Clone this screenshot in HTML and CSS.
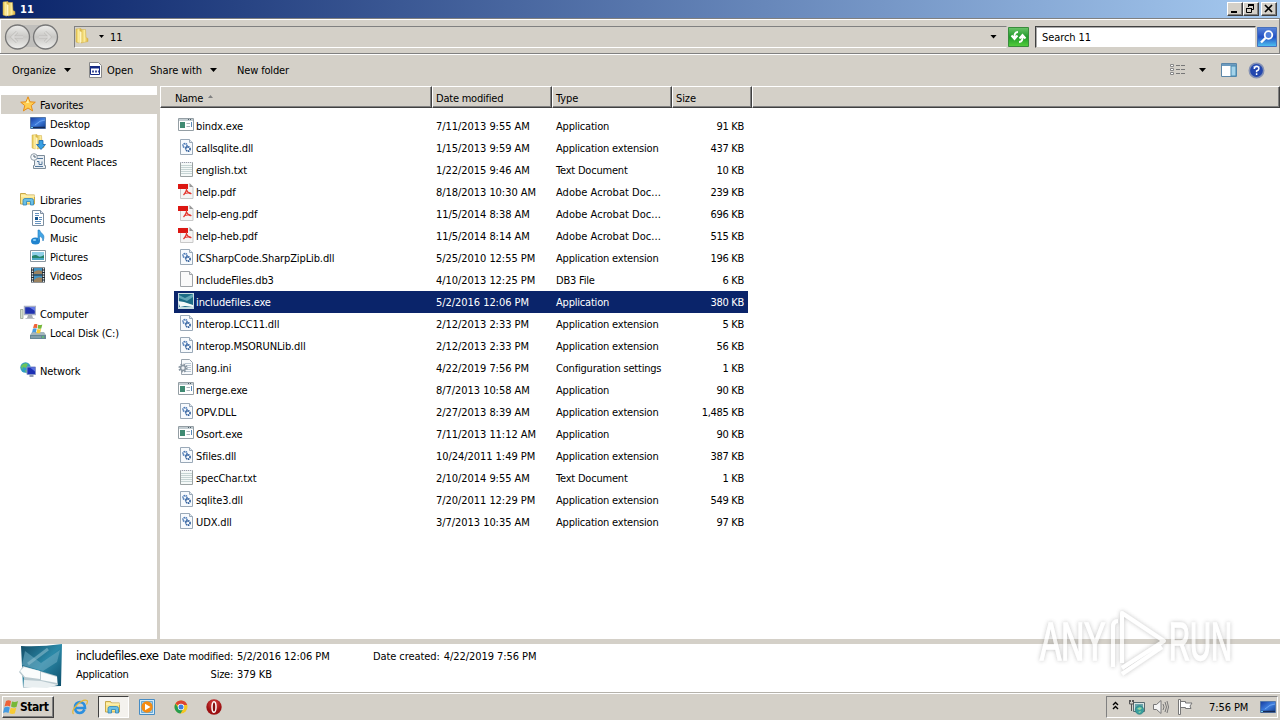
FILE: index.html
```html
<!DOCTYPE html>
<html lang="en">
<head>
<meta charset="utf-8">
<title>11</title>
<link rel="stylesheet" href="styles.css">
</head>
<body>
<svg class="defs" width="0" height="0" aria-hidden="true">
  <defs>
    <linearGradient id="gold" x1="0" x2="1"><stop offset="0" stop-color="#e2c04c"/><stop offset=".5" stop-color="#fbeb98"/><stop offset="1" stop-color="#d9ae3c"/></linearGradient>
    <linearGradient id="blue" x1="0" y1="0" x2="1" y2="1"><stop offset="0" stop-color="#163a9c"/><stop offset=".5" stop-color="#3f7fe0"/><stop offset="1" stop-color="#123c8c"/></linearGradient>
    <linearGradient id="teal" x1="0" y1="0" x2="1" y2="1"><stop offset="0" stop-color="#124a64"/><stop offset=".5" stop-color="#2b89a8"/><stop offset="1" stop-color="#0d4c68"/></linearGradient>
    <linearGradient id="disc" x1="0" y1="0" x2="0" y2="1"><stop offset="0" stop-color="#eeeeec"/><stop offset=".5" stop-color="#c9c8c5"/><stop offset="1" stop-color="#f0f0ee"/></linearGradient>
    <linearGradient id="grn" x1="0" y1="0" x2="0" y2="1"><stop offset="0" stop-color="#6cc46a"/><stop offset=".5" stop-color="#1f9a2a"/><stop offset="1" stop-color="#53cf3c"/></linearGradient>
    <linearGradient id="srch" x1="0" y1="0" x2="0" y2="1"><stop offset="0" stop-color="#5a86d8"/><stop offset=".5" stop-color="#2350c4"/><stop offset="1" stop-color="#4fc4f2"/></linearGradient>
    <radialGradient id="red" cy=".3"><stop offset="0" stop-color="#e24a48"/><stop offset="1" stop-color="#9c1012"/></radialGradient>
    <filter id="soft" x="-10%" y="-20%" width="120%" height="140%"><feDropShadow dx="0" dy="0" stdDeviation="2" flood-color="#777" flood-opacity=".6"/></filter>
  </defs>
  <symbol id="folder" viewBox="0 0 16 16"><path d="M2 1l5-.5v13L5 15l-3-1z" fill="url(#gold)" stroke="#d3b04a" stroke-width=".5"/><path d="M7 1.500h4.500l.5 8 2 1v3L7 15z" fill="url(#gold)" stroke="#d3b04a" stroke-width=".5"/><path d="M5.500 3l2 1v10l-2 1.500z" fill="#fff6c4"/></symbol>
  <symbol id="lib" viewBox="0 0 16 16"><path d="M.5 13V2.500h5l1 1.500h8V13z" fill="#fbe68c" stroke="#c8a84a"/><path d="M1 5h14" stroke="#fff7c9"/><path d="M3 14V9.500q0-2 2-2h6.500q2 0 2 2V14h-3v-3.500h-4V14z" fill="#69bfe6" stroke="#2d83b8" stroke-width=".8"/></symbol>
  <symbol id="exe" viewBox="0 0 16 16"><path d="M.5 1.500h15v12H.5z" fill="#fff" stroke="#949ea4"/><path d="M1 2h14v2H1z" fill="#c3cdd2"/><path d="M10 2.500h4" stroke="#4c5c66" stroke-dasharray="1 1"/><path d="M2 5h5v6H2z" fill="#3f8a72"/><path d="M8.500 6.500h3.500M8.500 9.500h3.500" stroke="#a9b5bb"/><path d="M13.500 5v5" stroke="#5989b8"/></symbol>
  <symbol id="page" viewBox="0 0 16 16"><path d="M2.500.5h9l3 3v12h-12z" fill="#fafafa" stroke="#a0a4a8"/><path d="M11.500.5v3h3" fill="#e4e6e8" stroke="#a0a4a8"/></symbol>
  <symbol id="dll" viewBox="0 0 16 16"><path d="M2.500.5h9l3 3v12h-12z" fill="#f7fafd" stroke="#9aa9b8"/><path d="M11.500.5v3h3" fill="#dfe7ee" stroke="#9aa9b8"/><circle cx="7" cy="6.500" r="2" fill="none" stroke="#4a78b4" stroke-width="1.700" stroke-dasharray="1.300 .5"/><circle cx="10" cy="10" r="2.100" fill="none" stroke="#315f9c" stroke-width="1.700" stroke-dasharray="1.300 .5"/></symbol>
  <symbol id="txt" viewBox="0 0 16 16"><path d="M2.500 1.500h12v14h-12z" fill="#f5f9f8" stroke="#9ba2a3"/><path d="M3 4.500h11M3 6.500h11M3 8.500h11M3 10.500h11M3 12.500h11" stroke="#c6d4d4"/><path d="M3 1.500h11" stroke="#dde" stroke-dasharray="1 1"/></symbol>
  <symbol id="pdf" viewBox="0 0 16 16"><path d="M2.500.5h9l3.500 3v12H2.500z" fill="#f4f4f4"/><path d="M2.500 6v9.500H15V4" fill="none" stroke="#c9c9c9"/><path d="M11.500 0L15.500 4h-4z" fill="#999"/><path d="M0 1h10v5H0z" fill="#dc1712"/><path d="M8.500 5q.5 3-3 7M8.500 7q2 4 5 3.500M6.500 10.500l6-1" fill="none" stroke="#e3342c" stroke-width="1.200"/></symbol>
  <symbol id="ini" viewBox="0 0 16 16"><path d="M3.500.5h8l3 3v12h-11z" fill="#f8fafc" stroke="#9aa4ae"/><path d="M7 4.500h6M8 6.500h5M9 8.500h4M9 10.500h4M7 12.500h6" stroke="#b9c6d2"/><circle cx="5" cy="9" r="3.400" fill="#eef1f4" stroke="#8996a2" stroke-width="2.400" stroke-dasharray="1.500 1.170"/><circle cx="5" cy="9" r="2.400" fill="#eef1f4" stroke="#8996a2" stroke-width="1.500"/></symbol>
  <symbol id="book" viewBox="0 0 46 46"><path d="M3 2q20 1 41-2l-1 42-38 1z" fill="url(#teal)"/><path d="M7 7l16 12L42 6l-3 12-14 9-21-6z" fill="#69a9bf" opacity=".6"/><path d="M10 20L30 5" stroke="#9cc8d6" stroke-width="3" opacity=".5"/><path d="M1 28l4-6 17 5 17 5 1 9-16 1-19 2 1-10z" fill="#b9c9cf"/><path d="M2 27l4-4 16 4 0 8-15-2zM23 28l16 5 0 6-16-3z" fill="#fafcfc"/><path d="M6 36l17 1 17 4-11 3-23-1z" fill="#e9eff1"/></symbol>
  <symbol id="bookmini" viewBox="0 0 16 16"><path d="M0 0h16v16H0z" fill="#c5dbe0"/><path d="M1 1h14v13H1z" fill="#1d6c86"/><path d="M1 2l6 3 8-4v3L9 8 1 5z" fill="#62a5b6"/><path d="M0 8l6 1 9 3v2l-8-1-5 1z" fill="#f4f9fa"/></symbol>
  <symbol id="star" viewBox="0 0 16 16"><path d="M8 .8l2 5 5.300.4-4.100 3.400 1.400 5.300L8 12l-4.600 2.900 1.400-5.300L.7 6.200 6 5.800z" fill="#ffcf52" stroke="#e58c1a"/><path d="M8 3l1 4H6z" fill="#fff3a8"/></symbol>
  <symbol id="desk" viewBox="0 0 16 16"><path d="M.5 2.500h15v11H.5z" fill="url(#blue)" stroke="#5577a8"/><path d="M1 12.500h14" stroke="#152954" stroke-width="1.500"/><path d="M1 12.500h2" stroke="#6fd0f0"/><path d="M5 10q5-5 10-5" stroke="#6ea4ee" fill="none"/></symbol>
  <symbol id="down" viewBox="0 0 16 16"><use href="#folder"/><path d="M9 6.500h4v4h2.500L11 15.500 6.500 10.500H9z" fill="#38a0e4" stroke="#1665ac" stroke-width=".8"/></symbol>
  <symbol id="recent" viewBox="0 0 16 16"><path d="M4.500 2.500h10v10h1v3h-12v-3h1z" fill="#e9eef3" stroke="#7b8b99"/><path d="M7 5.500h6M7 8.500h2v3h3v-3M5 13.500h8" stroke="#54789c" fill="none"/><circle cx="4" cy="4" r="3.300" fill="#f7fafc" stroke="#909da8"/><path d="M4 2v2h2" fill="none" stroke="#567"/></symbol>
  <symbol id="doc" viewBox="0 0 16 16"><path d="M2.500.5h8l3 3v12h-11z" fill="#fff" stroke="#7d8fa0"/><path d="M10.500.5v3h3" fill="#dde" stroke="#7d8fa0"/><path d="M5 3.500h4M5 5.500h4M5 11.500h6M5 13.500h6" stroke="#6693bf"/><path d="M5 7h3v3H5z" fill="#16558f"/><path d="M9 7.500h3M9 9.500h3" stroke="#6693bf"/></symbol>
  <symbol id="music" viewBox="0 0 16 16"><ellipse cx="5.500" cy="12" rx="4.500" ry="3.500" fill="#2084cf"/><path d="M8 12V1h1.500q.5 2 3 4t.5 7q0-4-3.500-5V12z" fill="#42a5e5" stroke="#1c75bb" stroke-width=".6"/><ellipse cx="4.500" cy="11" rx="1.700" ry="1" fill="#8cd1f8"/></symbol>
  <symbol id="pics" viewBox="0 0 16 16"><path d="M.5 2.500h15v11H.5z" fill="#fff" stroke="#8a96a0"/><path d="M2 4h12v8H2z" fill="#8fcfe6"/><path d="M2 8q4-2 6 0t6-1v5H2z" fill="#25846a"/><path d="M2 10h12v2H2z" fill="#4ba8c4"/></symbol>
  <symbol id="video" viewBox="0 0 16 16"><path d="M1 .5h14v15H1z" fill="#20282f"/><path d="M4 1h8v6.500H4zM4 8.500h8V15H4z" fill="#4293c3"/><path d="M4 5q3-3 8-1v3H4zM4 13q4-4 8-2v4H4z" fill="#9b8361"/><path d="M2.500 1v14M13.500 1v14" stroke="#d7e3ea" stroke-width="1.500" stroke-dasharray="1.500 1"/></symbol>
  <symbol id="comp" viewBox="0 0 16 16"><path d="M.5 4.500h2.500v9H.5z" fill="#d5dfcd" stroke="#8a9887" stroke-width=".7"/><path d="M4.500 1.500h11v8h-11z" fill="#2032b0" stroke="#a7afc4" stroke-width="1.400"/><path d="M9 2h6v4z" fill="#667ce8"/><path d="M8 10h4l1 3H7z" fill="#a8adb5"/><path d="M5.500 13.500h9" stroke="#bdc1c8"/></symbol>
  <symbol id="disk" viewBox="0 0 16 16"><path d="M2 8h12l2 3v3.500H0V11z" fill="#a3b6bd"/><path d="M0 11h16v4H0z" fill="#668896"/><path d="M1 13h10" stroke="#9db5bd"/><path d="M12 13h2" stroke="#61e35b"/><use href="#win" x="2" y="-1" width="11" height="11"/></symbol>
  <symbol id="win" viewBox="0 0 16 16"><path d="M3 2q2.500-1.500 5 0L7 7.500q-2.500-1.500-5.500 0z" fill="#ef6338"/><path d="M9 2.500q3 1 6-.5l-1.500 6q-3 1-5.500-.5z" fill="#76b83a"/><path d="M1.300 8.500q3-1.500 5.500 0L5.500 14Q3 12.500 0 14z" fill="#459be1"/><path d="M7.800 8.800q3 1 5.500 0l-1.500 5.700q-3 1-5.500-.5z" fill="#f7cb35"/></symbol>
  <symbol id="net" viewBox="0 0 16 16"><circle cx="5.500" cy="5.500" r="5.200" fill="#2f9cc4"/><path d="M1 4q3-4 7-2L6 6 3 5 2 8zM5 8l3 1-2 2z" fill="#6cc45c"/><path d="M7 5h8.500v7.500H7z" fill="#1c30b4" stroke="#8794c8"/><path d="M10 5.500h5v4z" fill="#5a72e0"/><path d="M9.500 13h4v2h-4z" fill="#919bb4"/></symbol>
  <symbol id="ie" viewBox="0 0 16 16"><path d="M12.500 10.500Q11 14 7.500 14 3 13.500 3 8.500T8 3q5 .5 5 6H4" fill="none" stroke="#2b8fdf" stroke-width="2.600"/><path d="M1.500 15Q-1 12 5 6T15 1.500q1 1-.5 4" fill="none" stroke="#e4b736" stroke-width="1.200"/></symbol>
  <symbol id="play" viewBox="0 0 16 16"><path d="M.5.500h15v15H.5z" fill="#d3eaf8" stroke="#468cc4"/><path d="M2.500 2.500h11v11h-11z" fill="#9fcdea" stroke="#68a8d4"/><circle cx="8" cy="8" r="5.700" fill="#f58b12"/><path d="M6 4.800L11.500 8 6 11.200z" fill="#fff"/></symbol>
  <symbol id="chrome" viewBox="0 0 16 16"><circle cx="8" cy="8" r="6.500" fill="#f5c623"/><path d="M8 8L2.400 4.700A6.500 6.500 0 0 1 14.200 6H8z" fill="#dc4433"/><path d="M2.400 4.700A6.500 6.500 0 0 0 7.500 14.500L10.500 9.500 5.500 9z" fill="#269c50"/><circle cx="8" cy="8" r="3.200" fill="#fff"/><circle cx="8" cy="8" r="2.500" fill="#3d7de0"/></symbol>
  <symbol id="opera" viewBox="0 0 16 16"><circle cx="8" cy="8" r="7.700" fill="url(#red)"/><ellipse cx="8" cy="8" rx="2" ry="5.300" fill="#861010" stroke="#fff" stroke-width="1.500"/></symbol>
</svg>

<header class="titlebar">
  <svg class="i16"><use href="#folder"/></svg><h1 class="title">11</h1>
  <div class="winbtns">
    <span class="winbtn"><svg width="13" height="11"><path d="M3 9h6" stroke="#000" stroke-width="2"/></svg></span>
    <span class="winbtn"><svg width="13" height="11"><path d="M4 1h6v2H4zM2 5h6v1H2z" fill="#000"/><path d="M4.500 4V1.500h5v5H8M2.500 5.500h5v4h-5z" fill="none" stroke="#000"/></svg></span>
    <span class="winbtn close"><svg width="13" height="11"><path d="M3 2l7 7M10 2L3 9" stroke="#000" stroke-width="1.700"/></svg></span>
  </div>
</header>

<nav class="addressbar">
  <svg class="navbtns" width="56" height="30" viewBox="0 0 56 30"><path d="M12 3h32v22H12z" fill="#c0bfbc"/><g fill="url(#disc)" stroke="#777" stroke-width="1.300"><circle cx="14.500" cy="15" r="12"/><circle cx="42.500" cy="15" r="12"/></g><path d="M20 15H9m5-5l-5 5 5 5M36 15h11m-5-5l5 5-5 5" fill="none" stroke="#bfbebb" stroke-width="3"/><path d="M20 15H9m5-5l-5 5 5 5M36 15h11m-5-5l5 5-5 5" fill="none" stroke="#dad9d7" stroke-width="1.700"/></svg>
  <div class="path"><svg class="i16 crumb"><use href="#folder"/></svg><i class="tri small"></i><span class="t">11</span><i class="tri last"></i></div>
  <svg class="refresh" width="21" height="20" viewBox="0 0 21 20"><path d="M.5.500h20v19H.5z" fill="url(#grn)" stroke="#398c3c"/><path d="M10 5q-4 0-3.500 6M3.500 8.500l3 3.500 3-3.500M11 15q4 0 3.500-6M11.500 11.500l3-3.500 3 3.500" fill="none" stroke="#fff" stroke-width="2"/></svg>
  <div class="search"><span class="t">Search 11</span></div>
  <svg class="go" width="20" height="20" viewBox="0 0 20 20"><path d="M.5.500h19v19H.5z" fill="url(#srch)" stroke="#4870bb"/><circle cx="11.500" cy="8" r="3.800" fill="#4f7edb" stroke="#fff" stroke-width="1.800"/><path d="M8.500 11L4 15.500" stroke="#fff" stroke-width="2.400"/></svg>
</nav>

<div class="toolbar">
  <span class="t tool">Organize</span><i class="tri a"></i>
  <svg class="i16 openico"><path d="M1.500.500h9l3 3v12h-12z" fill="#fff" stroke="#888"/><path d="M2.500 5.500h9v7h-9z" fill="#fff" stroke="#152a83"/><path d="M2 4h10v2.500H2z" fill="#152a83"/><path d="M4 9.500h7" stroke="#40509c" stroke-width="2" stroke-dasharray="2 1"/></svg>
  <span class="t open">Open</span><span class="t share">Share with</span><i class="tri b"></i><span class="t newf">New folder</span>
  <div class="views">
    <svg width="16" height="14"><path d="M.5 1.500h3v2h-3zM.5 5.500h3v2h-3zM.5 9.500h3v2h-3z" fill="#fff" stroke="#888"/><path d="M6 2.500h9M6 6.500h9M6 10.500h9" stroke="#777" stroke-dasharray="4 1"/></svg>
    <i class="tri c"></i>
    <svg class="pane" width="16" height="14"><path d="M.5.500h15v13H.5z" fill="#fff" stroke="#5b86a8"/><path d="M1 2h14" stroke="#6c9bbf" stroke-width="2"/><path d="M10 3h5v10h-5z" fill="#a4d3ea" stroke="#4788af"/></svg>
    <svg class="help" width="17" height="17"><circle cx="8.500" cy="8.500" r="7.200" fill="#2347ae" stroke="#8592b5" stroke-width="1.600"/><path d="M5 5q3.500-3 7 0" stroke="#7797e3" fill="none"/><path d="M6.300 7q0-2.500 2.300-2.500T10.900 6.700Q10.900 8 8.600 9v1.300M8.600 11.300v1.700" fill="none" stroke="#fff" stroke-width="1.500"/></svg>
  </div>
</div>

<main class="body">
  <aside class="tree">
    <div class="node hot"><svg class="i16"><use href="#star"/></svg><span class="t">Favorites</span></div>
    <div class="node sub"><svg class="i16"><use href="#desk"/></svg><span class="t">Desktop</span></div>
    <div class="node sub"><svg class="i16"><use href="#down"/></svg><span class="t">Downloads</span></div>
    <div class="node sub gap"><svg class="i16"><use href="#recent"/></svg><span class="t">Recent Places</span></div>
    <div class="node"><svg class="i16"><use href="#lib"/></svg><span class="t">Libraries</span></div>
    <div class="node sub"><svg class="i16"><use href="#doc"/></svg><span class="t">Documents</span></div>
    <div class="node sub"><svg class="i16"><use href="#music"/></svg><span class="t">Music</span></div>
    <div class="node sub"><svg class="i16"><use href="#pics"/></svg><span class="t">Pictures</span></div>
    <div class="node sub gap"><svg class="i16"><use href="#video"/></svg><span class="t">Videos</span></div>
    <div class="node"><svg class="i16"><use href="#comp"/></svg><span class="t">Computer</span></div>
    <div class="node sub gap"><svg class="i16"><use href="#disk"/></svg><span class="t">Local Disk (C:)</span></div>
    <div class="node"><svg class="i16"><use href="#net"/></svg><span class="t">Network</span></div>
  </aside>
  <section class="files">
    <div class="head"><div class="h hname"><span class="t">Name</span><i class="sort"></i></div><div class="h hdate"><span class="t">Date modified</span></div><div class="h htype"><span class="t">Type</span></div><div class="h hsize"><span class="t">Size</span></div><div class="h hrest"></div></div>
    <div class="rows" id="rows"></div>
  </section>
</main>

<footer class="details">
  <svg class="big"><use href="#book"/></svg>
  <div class="dcol one"><span class="fname">includefiles.exe</span><span class="t">Application</span></div>
  <div class="dcol lab"><span class="t">Date modified:</span><span class="t">Size:</span></div>
  <div class="dcol val"><span class="t">5/2/2016 12:06 PM</span><span class="t">379 KB</span></div>
  <div class="dcol lab two"><span class="t">Date created:</span></div>
  <div class="dcol val"><span class="t">4/22/2019 7:56 PM</span></div>
</footer>

<div class="taskbar">
  <div class="start"><svg class="i16 flag"><use href="#win"/></svg><b class="startt">Start</b></div>
  <div class="quick"><svg class="i16"><use href="#ie"/></svg></div>
  <div class="quick on"><svg class="i16"><use href="#lib"/></svg></div>
  <div class="quick"><svg class="i16"><use href="#play"/></svg></div>
  <div class="quick"><svg class="i16"><use href="#chrome"/></svg></div>
  <div class="quick"><svg class="i16"><use href="#opera"/></svg></div>
  <div class="tray">
    <svg class="chev" width="7" height="9"><path d="M1 4l2.500-2.500L6 4M1 8l2.500-2.500L6 8" fill="none" stroke="#000" stroke-width="1.400"/></svg>
    <svg class="i16 ti1"><path d="M4.500 3.500h11v9h-11z" fill="#d9e5e3" stroke="#596b70"/><path d="M6 5h8v6H6z" fill="#6ca5ac"/><path d="M.5 1v4h4V1M2.500 5v7M1.500 1v2M3.500 1v2" fill="none" stroke="#555"/><circle cx="10.500" cy="11" r="4.300" fill="#399e9d" stroke="#237a7c" stroke-width=".6"/><path d="M8 10q2-3 5-1l-2 2zM9 13l3-1-1 2z" fill="#9bd7a1"/></svg>
    <svg class="i16 ti2"><path d="M.5 5.500h3L8 1.500v13l-4.500-4H.5z" fill="#f4f4f4" stroke="#777"/><path d="M10 5q2 3 0 6M12 3q3 5 0 10M14 2q3 6 0 12" fill="none" stroke="#777"/></svg>
    <svg class="i16 ti3"><path d="M1.500.500h2v15h-2zM3.500 2.500h5v1.500h6.500l-2 3 1 2.500H8.500V8.500h-5z" fill="#fff" stroke="#777"/></svg>
    <span class="t clock">7:56 PM</span>
    <svg class="i16 ti4"><use href="#desk"/></svg>
  </div>
</div>

<svg class="watermark" width="240" height="80" viewBox="0 0 240 80"><g filter="url(#soft)"><g class="wm"><text x="0" y="0" transform="translate(8 55) scale(.6 1)">ANY</text><text x="0" y="0" transform="translate(137 55) scale(.55 1)">RUN</text></g><path d="M81 62V22q0-6 5-6M90 58V8l42 28-42 27M90 69l40-27" fill="none" stroke="#fff" stroke-width="4" stroke-linejoin="round"/></g></svg>
<script src="rows.js"></script>
</body>
</html>
```

FILE: styles.css
```css
* { box-sizing: border-box; }
body { margin: 0; width: 1280px; height: 720px; overflow: hidden; display: flex; flex-direction: column; background: #d4d0c8; color: #000; font-family: "DejaVu Sans Condensed", "DejaVu Sans", sans-serif; font-stretch: condensed; font-size: 11px; line-height: 14px; position: relative; }
svg { display: block; flex: none; }
.defs { position: absolute; }
.t { letter-spacing: -0.08px; white-space: pre; padding-top: 1px; }
.i16 { width: 16px; height: 16px; flex: none; }
.tri { flex: none; width: 7px; height: 4px; background: #000; clip-path: polygon(0 0, 100% 0, 50% 100%); }
.tri.small { width: 5px; height: 3px; }

.titlebar { height: 18px; flex: none; display: flex; align-items: center; padding: 0 3px 0 1px; background: linear-gradient(90deg, #0a246a, #a6caf0); }
.title { margin: 0 0 0 3px; color: #fff; font-size: 11px; font-weight: bold; line-height: 14px; padding-top: 1px; }
.winbtns { margin-left: auto; display: flex; }
.winbtn { width: 16px; height: 14px; background: #d4d0c8; border: 1px solid; border-color: #fff #404040 #404040 #fff; box-shadow: inset -1px -1px #808080; }
.close { margin-left: 2px; }

.addressbar { height: 36px; flex: none; display: flex; align-items: center; border-top: 1px solid #808080; border-bottom: 1px solid #808080; border-right: 1px solid #808080; box-shadow: inset 1px 1px #fff, 0 1px #fff; padding: 1px 1px 0 3px; }
.path { margin-left: 15px; width: 933px; height: 22px; display: flex; align-items: center; border: 1px solid; border-color: #808080 #d4d0c8 #fff #808080; }
.path .t { padding-top: 2px; }
.crumb { margin-top: -2px; margin-left: -1px; }
.path .small { margin: 0 6px 0 9px; }
.path .last { margin-left: auto; margin-right: 9px; }
.refresh { margin-left: 1px; }
.search { margin-left: 6px; width: 221px; height: 22px; background: #fff; border: 1px solid; border-color: #404040 #d4d0c8 #d4d0c8 #404040; box-shadow: inset 1px 1px #aaa; padding: 4px 0 0 6px; }
.go { margin-left: 1px; }

.toolbar { height: 32px; flex: none; display: flex; align-items: center; padding-left: 12px; }
.tool { width: 52px; }
.openico { margin-left: 17px; }
.open { margin-left: 3px; width: 43px; }
.share { width: 60px; }
.newf { margin-left: 20px; letter-spacing: -0.15px; }
.views { margin-left: auto; display: flex; align-items: center; padding-right: 15px; }
.c { margin-left: 13px; }
.pane { margin-left: 15px; }
.help { margin-left: 11px; }

.body { height: 553px; flex: none; display: flex; background: #fff; }
.tree { width: 160px; padding: 9px 0 0 1px; border-right: 3px solid #d4d0c8; }
.node { height: 19px; display: flex; align-items: center; gap: 4px; padding-left: 19px; }
.node .t { padding-top: 2px; letter-spacing: -0.14px; }
.node .i16 { margin-top: -1px; }
.sub { padding-left: 29px; }
.gap { margin-bottom: 19px; }
.hot { background: #d4d0c8; }
.files { flex: 1; }
.head { height: 22px; display: flex; background: #d4d0c8; }
.h { padding: 4px 0 0 4px; border: 1px solid; border-color: #fff #404040 #404040 #fff; box-shadow: inset -1px -1px #808080; display: flex; }
.hname { width: 272px; padding-left: 14px; }
.hname .t { letter-spacing: -0.3px; }
.hdate, .htype { width: 120px; padding-left: 3px; }
.hdate .t { letter-spacing: -0.22px; }
.hsize { width: 80px; padding-left: 3px; }
.hrest { flex: 1; }
.sort { width: 5px; height: 3px; margin: 4px 0 0 5px; background: #808080; clip-path: polygon(50% 0, 100% 100%, 0 100%); }
.rows { padding: 7px 0 0 14px; }
.row { width: 574px; height: 22px; display: grid; grid-template-columns: 18px 244px 120px 120px 68px; align-items: center; }
.row .i16 { margin-left: 4px; margin-top: -2px; }
.row .name { padding-left: 4px; letter-spacing: -0.12px; }
.row .date { letter-spacing: -0.05px; }
.row .type { letter-spacing: -0.2px; }
.row .cut { letter-spacing: 0.03px; }
.row .size { text-align: right; letter-spacing: -0.3px; }
.sel { background: #0a246a; color: #fff; }

.details { height: 54px; flex: none; display: flex; border-top: 5px solid #d4d0c8; background: #fff; border-bottom: 1px solid #b5b2ab; padding-left: 18px; }
.big { width: 46px; height: 46px; }
.dcol { display: flex; flex-direction: column; gap: 3px; padding-top: 5px; }
.one { width: 85px; margin-left: 12px; }
.one .t { letter-spacing: -0.25px; }
.fname { font-size: 13px; letter-spacing: -0.52px; white-space: nowrap; height: 15px; line-height: 14px; }
.lab { width: 72px; text-align: right; }
.lab .t { letter-spacing: -0.25px; }
.val { margin-left: 4px; }
.val .t { letter-spacing: -0.06px; }
.two { margin-left: 38px; }
.two .t { letter-spacing: -0.08px; }

.taskbar { height: 27px; flex: none; display: flex; align-items: center; padding: 1px 2px 2px; border-top: 1px solid #fff; }
.start { width: 52px; height: 22px; display: flex; align-items: center; gap: 1px; padding-left: 0; border: 1px solid; border-color: #fff #404040 #404040 #fff; box-shadow: inset -1px -1px #808080; margin-right: 9px; }
.startt { font-size: 12px; letter-spacing: -0.45px; }
.quick { width: 31px; height: 22px; margin-left: 1px; margin-right: 1.700px; display: flex; align-items: center; justify-content: center; }
.on { background: #f4f2ee; border: 1px solid; border-color: #404040 #fff #fff #404040; }
.tray { width: 172px; height: 22px; margin-left: auto; display: flex; align-items: center; border: 1px solid; border-color: #808080 #fff #fff #808080; }
.chev { margin-left: 5px; margin-top: -2px; }
.ti1 { margin-left: 10px; }
.ti2 { margin-left: 8px; }
.ti3 { margin-left: 8px; }
.clock { margin-left: 16px; width: 41px; padding-top: 2px; }
.ti4 { margin-left: 10px; }

.watermark { position: absolute; left: 1032px; top: 605px; opacity: .75; }
.wm { font: 53px "Liberation Sans", sans-serif; fill: #fff; stroke: #fff; stroke-width: 1.500px; }
```

FILE: rows.js
```js
const files = [
  ["exe", "bindx.exe", "7/11/2013 9:55 AM", "Application", "91 KB"],
  ["dll", "callsqlite.dll", "1/15/2013 9:59 AM", "Application extension", "437 KB"],
  ["txt", "english.txt", "1/22/2015 9:46 AM", "Text Document", "10 KB"],
  ["pdf", "help.pdf", "8/18/2013 10:30 AM", "Adobe Acrobat Doc...", "239 KB"],
  ["pdf", "help-eng.pdf", "11/5/2014 8:38 AM", "Adobe Acrobat Doc...", "696 KB"],
  ["pdf", "help-heb.pdf", "11/5/2014 8:14 AM", "Adobe Acrobat Doc...", "515 KB"],
  ["dll", "ICSharpCode.SharpZipLib.dll", "5/25/2010 12:55 PM", "Application extension", "196 KB"],
  ["page", "IncludeFiles.db3", "4/10/2013 12:25 PM", "DB3 File", "6 KB"],
  ["bookmini", "includefiles.exe", "5/2/2016 12:06 PM", "Application", "380 KB"],
  ["dll", "Interop.LCC11.dll", "2/12/2013 2:33 PM", "Application extension", "5 KB"],
  ["dll", "Interop.MSORUNLib.dll", "2/12/2013 2:33 PM", "Application extension", "56 KB"],
  ["ini", "lang.ini", "4/22/2019 7:56 PM", "Configuration settings", "1 KB"],
  ["exe", "merge.exe", "8/7/2013 10:58 AM", "Application", "90 KB"],
  ["dll", "OPV.DLL", "2/27/2013 8:39 AM", "Application extension", "1,485 KB"],
  ["exe", "Osort.exe", "7/11/2013 11:12 AM", "Application", "90 KB"],
  ["dll", "Sfiles.dll", "10/24/2011 1:49 PM", "Application extension", "387 KB"],
  ["txt", "specChar.txt", "2/10/2014 9:55 AM", "Text Document", "1 KB"],
  ["dll", "sqlite3.dll", "7/20/2011 12:29 PM", "Application extension", "549 KB"],
  ["dll", "UDX.dll", "3/7/2013 10:35 AM", "Application extension", "97 KB"]
];
document.getElementById("rows").innerHTML = files.map(([icon, name, date, type, size]) =>
  `<div class="row${icon === "bookmini" ? " sel" : ""}"><svg class="i16"><use href="#${icon}"/></svg>` +
  `<span class="t name">${name}</span><span class="t date">${date}</span>` +
  `<span class="t type${type.endsWith("...") ? " cut" : ""}">${type}</span><span class="t size">${size}</span></div>`).join("");
```
